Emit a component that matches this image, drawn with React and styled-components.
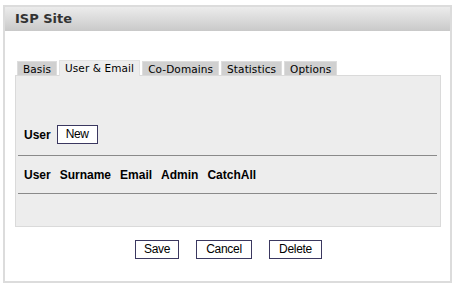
import React from 'react'
import styled, { createGlobalStyle } from 'styled-components'

const Global = createGlobalStyle`
  html, body { margin: 0; padding: 0; background: #fff; }
  body { font-family: "Liberation Sans", Arial, sans-serif; }
`

const Frame = styled.div`
  margin: 5px 0 0 3px;
  width: 445px;
  height: 274px;
  border: 2px solid #dcdcdc;
  display: flex;
  flex-direction: column;
`

const Title = styled.div`
  height: 24px;
  background: linear-gradient(#ececec, #c9c9c9);
  font-family: "DejaVu Sans", Verdana, sans-serif;
  font-weight: bold;
  font-size: 13px;
  color: #333;
  padding-left: 10px;
  line-height: 24px;
`

const Body = styled.div`
  padding: 29px 9px 0 10px;
  display: flex;
  flex-direction: column;
`

const Tabs = styled.div`
  display: flex;
  gap: 2px;
  padding-left: 2px;
  height: 15px;
`

const Tab = styled.div`
  font-family: "DejaVu Sans", Verdana, sans-serif;
  font-size: 10.5px;
  letter-spacing: 0.1px;
  line-height: 14px;
  padding: 0 5px;
  color: #000;
  background: ${({ active }) => (active ? '#ededed' : '#d0d0d0')};
  border: 1px solid ${({ active }) => (active ? '#e2e2e2' : '#dddddd')};
  border-bottom: none;
  position: relative;
  z-index: ${({ active }) => (active ? 2 : 0)};
  height: ${({ active }) => (active ? '15px' : '14px')};
  margin-top: ${({ active }) => (active ? '0' : '1px')};
`

const Panel = styled.div`
  background: #ededed;
  border: 1px solid #dadada;
  height: 150px;
  display: flex;
  flex-direction: column;
  position: relative;
  z-index: 1;
`

const Row = styled.div`
  display: flex;
  align-items: center;
  gap: ${({ gap }) => gap || 6}px;
  padding-left: 8px;
  height: ${({ h }) => h}px;
  margin-top: ${({ mt }) => mt || 0}px;
`

const Label = styled.span`
  font-weight: bold;
  font-size: 12px;
  color: #000;
`

const Button = styled.button`
  font-family: "Liberation Sans", Arial, sans-serif;
  font-size: 12px;
  letter-spacing: -0.3px;
  height: 19px;
  width: ${({ w }) => w}px;
  padding: 0;
  background: #fff;
  border: 1px solid #3b3860;
  color: #000;
  line-height: 17px;
  margin: 0;
`

const Rule = styled.div`
  height: 1px;
  background: #8a8a8a;
  margin: ${({ mt }) => mt || 0}px 3px 0 2px;
`

const Actions = styled.div`
  display: flex;
  justify-content: center;
  gap: 17px;
  margin-top: 13px;
  padding-left: 1px;
`

const tabs = ['Basis', 'User & Email', 'Co-Domains', 'Statistics', 'Options']
const cols = ['User', 'Surname', 'Email', 'Admin', 'CatchAll']

export default function App() {
  return (
    <>
      <Global />
      <Frame>
        <Title>ISP Site</Title>
        <Body>
          <Tabs>
            {tabs.map((t) => (
              <Tab key={t} active={t === 'User & Email'}>{t}</Tab>
            ))}
          </Tabs>
          <Panel>
            <Row h={19} mt={49}>
              <Label>User</Label>
              <Button w={41}>New</Button>
            </Row>
            <Rule mt={11} />
            <Row h={37} gap={9}>
              {cols.map((c) => <Label key={c}>{c}</Label>)}
            </Row>
            <Rule />
          </Panel>
          <Actions>
            <Button w={44}>Save</Button>
            <Button w={56}>Cancel</Button>
            <Button w={53}>Delete</Button>
          </Actions>
        </Body>
      </Frame>
    </>
  )
}
